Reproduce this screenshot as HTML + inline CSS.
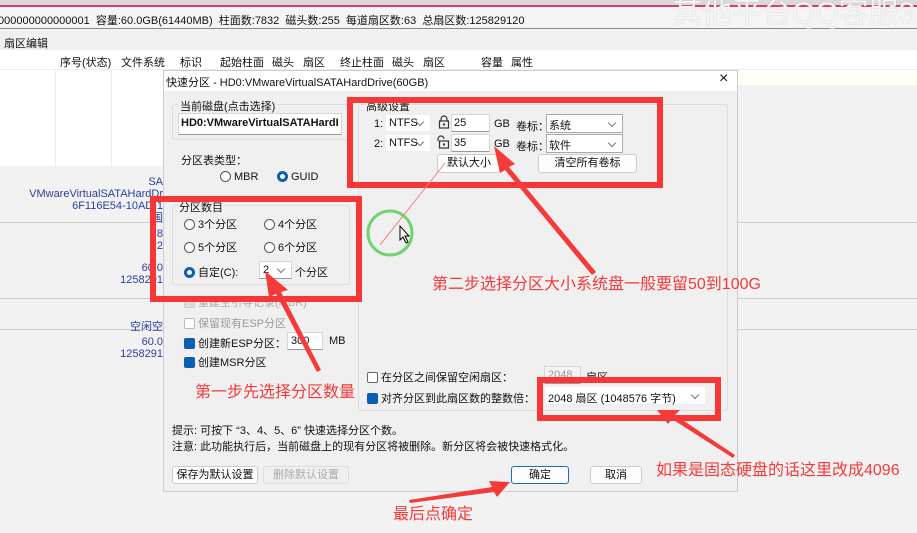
<!DOCTYPE html>
<html><head><meta charset="utf-8"><style>
*{margin:0;padding:0;box-sizing:border-box}
body{width:917px;height:533px;overflow:hidden;background:#f2f2f2;font-family:"Liberation Sans","Noto Sans CJK SC",sans-serif;font-size:11px;color:#111;position:relative}
.a{position:absolute;white-space:nowrap}
.blue{color:#2a3f9e;text-align:right}
.inp{position:absolute;background:#fff;border:1px solid #d6d6d6;border-bottom-color:#999}
.btn{position:absolute;background:#fdfdfd;border:1px solid #ccc;border-radius:3px;text-align:center;line-height:17px}
.grp{position:absolute;border:1px solid #dcdcdc;border-radius:3px}
.rb{display:inline-block;width:11px;height:11px;border:1px solid #555;border-radius:50%;vertical-align:-2px;margin-right:3px;background:#fff}
.rb.on{border:3px solid #0a5fb4}
.cb{display:inline-block;width:11px;height:11px;border:1px solid #666;border-radius:2px;vertical-align:-2px;margin-right:3px;background:#fff}
.cb.on{background:#0a5fb4;border-color:#0a5fb4}
.red{position:absolute;border:6px solid #f73636}
.rt{position:absolute;color:#f53a3a;font-size:16px;white-space:nowrap}
.dd:after{content:"";position:absolute;right:7px;top:50%;margin-top:-4px;width:5px;height:5px;border-right:1px solid #777;border-bottom:1px solid #777;transform:rotate(45deg)}
</style></head><body>
<div class="a" style="left:0;top:0;width:917px;height:5px;background:#d9d9d9"></div>
<div class="a" style="left:0;top:5px;width:917px;height:2px;background:#d63a6e"></div>
<div class="a" style="left:0;top:7px;width:917px;height:22px;background:#f5f5f5;border-bottom:1px solid #888"></div>
<div class="a" style="left:-2px;top:12px;font-size:11px">000000000000001&nbsp; 容量:60.0GB(61440MB)&nbsp; 柱面数:7832&nbsp; 磁头数:255&nbsp; 每道扇区数:63&nbsp; 总扇区数:125829120</div>
<div class="a" style="left:672px;top:-12px;font-size:30px;color:#f4f4f4;text-shadow:0 0 1px #bbb">其他平台QQ客服3</div>
<div class="a" style="left:0;top:31px;width:917px;height:19px;background:#f0f0f0"></div>
<div class="a" style="left:4px;top:35px">扇区编辑</div>
<div class="a" style="left:0;top:50px;width:917px;height:20px;background:#fff;border-bottom:1px solid #eee"></div>
<div class="a" style="left:60px;top:54px">序号(状态)</div>
<div class="a" style="left:121px;top:54px">文件系统</div>
<div class="a" style="left:180px;top:54px">标识</div>
<div class="a" style="left:220px;top:54px">起始柱面</div>
<div class="a" style="left:272px;top:54px">磁头</div>
<div class="a" style="left:303px;top:54px">扇区</div>
<div class="a" style="left:340px;top:54px">终止柱面</div>
<div class="a" style="left:392px;top:54px">磁头</div>
<div class="a" style="left:423px;top:54px">扇区</div>
<div class="a" style="left:481px;top:54px">容量</div>
<div class="a" style="left:511px;top:54px">属性</div>
<div class="a" style="left:0;top:70px;width:163px;height:96px;background:#fff"></div>
<div class="a" style="left:55px;top:70px;width:1px;height:96px;background:#eee"></div>
<div class="a" style="left:111px;top:70px;width:1px;height:96px;background:#eee"></div>
<div class="a" style="left:737px;top:70px;width:180px;height:15px;background:#fffef8"></div>
<div class="a" style="left:0;top:222px;width:163px;height:1px;background:#ccc"></div>
<div class="a" style="left:737px;top:222px;width:180px;height:1px;background:#ccc"></div>
<div class="a" style="left:0;top:298px;width:163px;height:1px;background:#ccc"></div>
<div class="a" style="left:737px;top:298px;width:180px;height:1px;background:#ccc"></div>
<div class="a" style="left:0;top:329px;width:163px;height:1px;background:#ccc"></div>
<div class="a" style="left:737px;top:329px;width:180px;height:1px;background:#ccc"></div>
<div class="a blue" style="left:0;top:176px;width:163px;line-height:12px">SA<br>VMwareVirtualSATAHardDr<br>6F116E54-10AD-1<br>国</div>
<div class="a blue" style="left:0;top:228px;width:163px;line-height:12px">78<br>2</div>
<div class="a blue" style="left:0;top:262px;width:163px;line-height:12px">60.0<br>1258291</div>
<div class="a blue" style="left:0;top:318px;width:163px">空闲空</div>
<div class="a blue" style="left:0;top:336px;width:163px;line-height:12px">60.0<br>1258291</div>
<div class="a" style="left:163px;top:70px;width:575px;height:422px;background:#f0f0f0;border:1px solid #ccc"></div>
<div class="a" style="left:164px;top:71px;width:573px;height:20px;background:#fff"></div>
<div class="a" style="left:166px;top:74px;font-size:11px">快速分区 - HD0:VMwareVirtualSATAHardDrive(60GB)</div>
<div class="a" style="left:719px;top:70px;font-size:16px">×</div>
<div class="grp" style="left:172px;top:104px;width:178px;height:36px"></div>
<div class="a" style="left:178px;top:98px;background:#f0f0f0;padding:0 2px">当前磁盘(点击选择)</div>
<div class="inp" style="left:178px;top:113px;width:164px;height:22px;font-weight:bold;padding:3px 2px;overflow:hidden">HD0:VMwareVirtualSATAHardI</div>
<div class="a" style="left:181px;top:152px">分区表类型：</div>
<div class="a" style="left:220px;top:171px"><span class="rb"></span>MBR</div>
<div class="a" style="left:277px;top:171px"><span class="rb on"></span>GUID</div>
<div class="grp" style="left:172px;top:205px;width:178px;height:80px"></div>
<div class="a" style="left:179px;top:199px;background:#f0f0f0">分区数目</div>
<div class="a" style="left:184px;top:216px"><span class="rb"></span>3个分区</div>
<div class="a" style="left:264px;top:216px"><span class="rb"></span>4个分区</div>
<div class="a" style="left:184px;top:239px"><span class="rb"></span>5个分区</div>
<div class="a" style="left:264px;top:239px"><span class="rb"></span>6个分区</div>
<div class="a" style="left:184px;top:264px"><span class="rb on"></span>自定(C):</div>
<div class="inp dd" style="left:259px;top:261px;width:33px;height:18px;padding:2px 3px">2</div>
<div class="a" style="left:295px;top:264px">个分区</div>
<div class="a" style="left:184px;top:294px;color:#aaa"><span class="cb" style="border-color:#ccc;background:#ddd"></span>重建主引导记录(MBR)</div>
<div class="a" style="left:184px;top:315px;color:#999"><span class="cb" style="border-color:#bbb"></span>保留现有ESP分区</div>
<div class="a" style="left:184px;top:335px"><span class="cb on"></span>创建新ESP分区：</div>
<div class="inp" style="left:287px;top:332px;width:36px;height:18px;padding:2px 3px">300</div>
<div class="a" style="left:329px;top:335px">MB</div>
<div class="a" style="left:184px;top:354px"><span class="cb on"></span>创建MSR分区</div>
<div class="grp" style="left:358px;top:104px;width:370px;height:307px"></div>
<div class="a" style="left:366px;top:98px;background:#f0f0f0">高级设置</div>
<div class="a" style="left:374px;top:118px">1:</div>
<div class="inp dd" style="left:385px;top:114px;width:46px;height:18px;padding:2px 3px;border:1px solid #eee">NTFS</div>
<svg class="a" style="left:438px;top:115px" width="12" height="14"><path d="M3 6V4a3 3 0 0 1 6 0v2" fill="none" stroke="#333" stroke-width="1.2"/><rect x="1.5" y="6" width="9" height="7" fill="none" stroke="#333" stroke-width="1.2"/><rect x="5" y="8.5" width="2" height="2" fill="#333"/></svg>
<div class="inp" style="left:451px;top:114px;width:39px;height:18px;padding:2px 2px">25</div>
<div class="a" style="left:494px;top:118px">GB</div>
<div class="a" style="left:516px;top:118px">卷标：</div>
<div class="inp dd" style="left:546px;top:114px;width:77px;height:19px;padding:2px 2px;border-color:#aaa">系统</div>
<div class="a" style="left:374px;top:138px">2:</div>
<div class="inp dd" style="left:385px;top:134px;width:46px;height:18px;padding:2px 3px;border:1px solid #eee">NTFS</div>
<svg class="a" style="left:436px;top:135px" width="14" height="14"><path d="M2 6V4a3 3 0 0 1 6 0" fill="none" stroke="#333" stroke-width="1.2"/><rect x="3.5" y="6" width="9" height="7" fill="none" stroke="#333" stroke-width="1.2"/><rect x="7" y="8.5" width="2" height="2" fill="#333"/></svg>
<div class="inp" style="left:451px;top:134px;width:39px;height:18px;padding:2px 2px">35</div>
<div class="a" style="left:494px;top:138px">GB</div>
<div class="a" style="left:516px;top:138px">卷标：</div>
<div class="inp dd" style="left:546px;top:134px;width:77px;height:19px;padding:2px 2px;border-color:#aaa">软件</div>
<div class="btn" style="left:437px;top:154px;width:64px;height:19px">默认大小</div>
<div class="btn" style="left:538px;top:154px;width:99px;height:19px">清空所有卷标</div>
<div class="a" style="left:367px;top:369px"><span class="cb"></span>在分区之间保留空闲扇区：</div>
<div class="inp" style="left:544px;top:366px;width:37px;height:18px;padding:2px 3px;color:#999;background:#f4f4f4">2048</div>
<div class="a" style="left:586px;top:369px">扇区</div>
<div class="a" style="left:367px;top:390px"><span class="cb on"></span>对齐分区到此扇区数的整数倍：</div>
<div class="inp dd" style="left:544px;top:386px;width:162px;height:19px;padding:3px 3px;border-color:#eee">2048 扇区 (1048576 字节)</div>
<div class="a" style="left:172px;top:422px">提示: 可按下 “3、4、5、6” 快速选择分区个数。</div>
<div class="a" style="left:172px;top:438px">注意: 此功能执行后，当前磁盘上的现有分区将被删除。新分区将会被快速格式化。</div>
<div class="btn" style="left:172px;top:466px;width:86px;height:18px">保存为默认设置</div>
<div class="btn" style="left:263px;top:466px;width:86px;height:18px;color:#aaa;background:#f0f0f0;border-color:#ddd">删除默认设置</div>
<div class="btn" style="left:511px;top:466px;width:58px;height:18px;border-color:#1a6cc0">确定</div>
<div class="btn" style="left:590px;top:466px;width:52px;height:18px">取消</div>
<div class="red" style="left:347px;top:97px;width:316px;height:91px"></div>
<div class="red" style="left:150px;top:196px;width:212px;height:106px"></div>
<div class="red" style="left:537px;top:377px;width:184px;height:44px"></div>
<svg class="a" style="left:0;top:0" width="917" height="533">
<circle cx="390" cy="233" r="22" fill="none" stroke="#6fd46f" stroke-width="3"/>
<line x1="445" y1="163" x2="380" y2="245" stroke="#f08080" stroke-width="1"/>
<path d="M400 226 l0 14 l3-3 l3 6 l2-1 l-3-6 l4 0z" fill="#fff" stroke="#000" stroke-width="1"/>
<polygon fill="#f53a3a" points="494,146 515,164 509,167 596,272 592,275 505,170 500,173"/>
<polygon fill="#f53a3a" points="265,271 288,290 281,292 321,370 317,372 276,294 269,297"/>
<polygon fill="#f53a3a" points="657,410 680,410 675,415 735,455 733,458 672,419 668,424"/>
<polygon fill="#f53a3a" points="510,482 497,497 494,492 410,503 409,500 492,487 489,481"/>
</svg>
<div class="rt" style="left:432px;top:270px">第二步选择分区大小系统盘一般要留50到100G</div>
<div class="rt" style="left:195px;top:378px">第一步先选择分区数量</div>
<div class="rt" style="left:656px;top:456px">如果是固态硬盘的话这里改成4096</div>
<div class="rt" style="left:393px;top:500px">最后点确定</div>
</body></html>
